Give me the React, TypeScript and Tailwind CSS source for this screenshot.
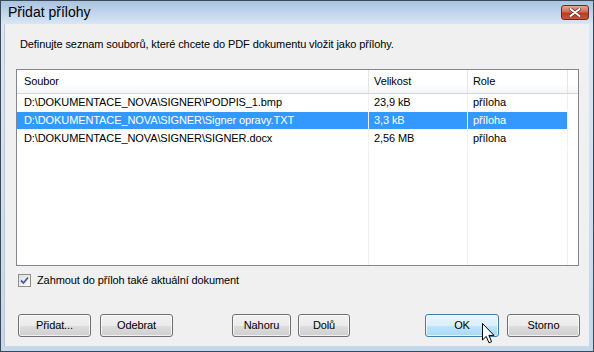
import React from "react";

interface Attachment {
  file: string;
  size: string;
  role: string;
}

const attachments: Attachment[] = [
  { file: "D:\\DOKUMENTACE_NOVA\\SIGNER\\PODPIS_1.bmp", size: "23,9 kB", role: "příloha" },
  { file: "D:\\DOKUMENTACE_NOVA\\SIGNER\\Signer opravy.TXT", size: "3,3 kB", role: "příloha" },
  { file: "D:\\DOKUMENTACE_NOVA\\SIGNER\\SIGNER.docx", size: "2,56 MB", role: "příloha" },
];

const font = { fontFamily: '"Liberation Sans", Arial, sans-serif' };

function VistaButton({ label, width, focused }: { label: string; width: string; focused?: boolean }) {
  const base =
    "h-[23px] rounded-[3px] border text-[11px] tracking-[-0.1px] text-black flex items-center justify-center shadow-[inset_0_0_0_1px_rgba(255,255,255,0.7)]";
  if (focused) {
    return (
      <div
        className={`${base} ${width} border-[#3c7fb1] bg-[linear-gradient(#eaf6fd_0%,#d9f0fc_50%,#bee6fd_51%,#a7d9f5_100%)]`}
      >
        {label}
      </div>
    );
  }
  return (
    <div
      className={`${base} ${width} border-[#707070] bg-[linear-gradient(#f2f2f2_0%,#ebebeb_50%,#dddddd_51%,#cfcfcf_100%)]`}
    >
      {label}
    </div>
  );
}

export default function App() {
  const emptyRows = Array.from({ length: 8 });

  return (
    <div className="w-[594px] h-[352px] overflow-hidden" style={font}>
      <div className="relative w-[594px] h-[352px] border border-[#3b4856] bg-[linear-gradient(#a9c3e1_0px,#c6d8ed_14px,#dbe7f4_24px,#c4d8ec_100%)] flex flex-col">
        {/* title bar */}
        <div className="h-[23px] flex items-start justify-between pl-[7px] pr-[4px]">
          <span className="text-[14px] leading-[18px] text-black mt-[2px]">Přidat přílohy</span>
          <div className="mt-[4px] w-[28px] h-[15px] rounded-[3px] border border-[#6d2b22] bg-[linear-gradient(#e8a393_0%,#d46a52_45%,#bb3a22_55%,#c9573c_100%)] flex items-center justify-center">
            <svg width="12" height="9" viewBox="0 0 12 9">
              <path d="M1.5 1 L10.5 8 M10.5 1 L1.5 8" stroke="#5a2a22" strokeWidth="3.4" strokeLinecap="round" />
              <path d="M1.5 1 L10.5 8 M10.5 1 L1.5 8" stroke="#ffffff" strokeWidth="2" strokeLinecap="round" />
            </svg>
          </div>
        </div>

        {/* client area */}
        <div className="ml-[3px] w-[585px] h-[322px] bg-[#f0f0f0] border-l border-[#b7c6d8] flex flex-col text-[11px] tracking-[-0.1px]">
          <div className="pl-[15px] pt-[12px] leading-[16px] text-black">
            Definujte seznam souborů, které chcete do PDF dokumentu vložit jako přílohy.
          </div>

          {/* list view */}
          <div className="ml-[11px] mt-[17px] w-[563px] h-[197px] border border-[#828790] bg-white overflow-hidden flex flex-col">
            <div className="h-[24px] flex border-b border-[#d5d5d5] bg-[linear-gradient(#ffffff_0%,#ffffff_60%,#f4f5f7_100%)] text-black shrink-0">
              <div className="w-[352px] border-r border-[#e5e5e5] pl-[7px] flex items-center">Soubor</div>
              <div className="w-[99px] border-r border-[#e5e5e5] pl-[5px] flex items-center">Velikost</div>
              <div className="w-[100px] border-r border-[#e5e5e5] pl-[5px] flex items-center">Role</div>
              <div className="flex-1" />
            </div>
            {attachments.map((a, i) => {
              const sel = i === 1;
              const cell = sel ? "bg-[#3399ff] text-white" : "text-black";
              return (
                <div key={a.file} className="h-[18px] flex shrink-0">
                  <div className={`w-[352px] h-[17px] border-r border-[#f0f0f0] pl-[7px] flex items-center ${cell}`}>{a.file}</div>
                  <div className={`w-[99px] h-[17px] border-r border-[#f0f0f0] pl-[5px] flex items-center ${cell}`}>{a.size}</div>
                  <div className={`w-[100px] h-[17px] border-r border-[#f0f0f0] pl-[5px] flex items-center ${cell}`}>{a.role}</div>
                  <div className="flex-1" />
                </div>
              );
            })}
            {emptyRows.map((_, i) => (
              <div key={i} className="h-[18px] flex shrink-0">
                <div className="w-[352px] border-r border-[#f0f0f0]" />
                <div className="w-[99px] border-r border-[#f0f0f0]" />
                <div className="w-[100px] border-r border-[#f0f0f0]" />
                <div className="flex-1" />
              </div>
            ))}
          </div>

          {/* checkbox */}
          <div className="ml-[13px] mt-[8px] flex items-center gap-[6px] h-[13px]">
            <div className="w-[13px] h-[13px] border border-[#8f8f8f] bg-[linear-gradient(135deg,#dcdcdc,#ffffff)] flex items-center justify-center">
              <svg width="9" height="9" viewBox="0 0 9 9">
                <path d="M1 4.5 L3.5 7 L8 1.5" stroke="#4a5f97" strokeWidth="1.8" fill="none" />
              </svg>
            </div>
            <span className="text-black">Zahmout do příloh také aktuální dokument</span>
          </div>

          {/* buttons */}
          <div className="ml-[13px] mt-[27px] flex">
            <VistaButton label="Přidat..." width="w-[73px]" />
            <div className="w-[9px]" />
            <VistaButton label="Odebrat" width="w-[73px]" />
            <div className="w-[59px]" />
            <VistaButton label="Nahoru" width="w-[59px]" />
            <div className="w-[7px]" />
            <VistaButton label="Dolů" width="w-[52px]" />
            <div className="w-[75px]" />
            <VistaButton label="OK" width="w-[74px]" focused />
            <div className="w-[8px]" />
            <VistaButton label="Storno" width="w-[73px]" />
          </div>
        </div>

        {/* mouse pointer */}
        <svg className="absolute left-[480px] top-[321px]" width="14" height="23" viewBox="0 0 14 23">
          <path d="M1.5 1.5 L1.5 18 L5.2 14.4 L8 20.8 L10.6 19.7 L7.9 13.4 L13 13.4 Z" fill="#ffffff" stroke="#000000" strokeWidth="1" strokeLinejoin="round" />
        </svg>
      </div>
    </div>
  );
}
